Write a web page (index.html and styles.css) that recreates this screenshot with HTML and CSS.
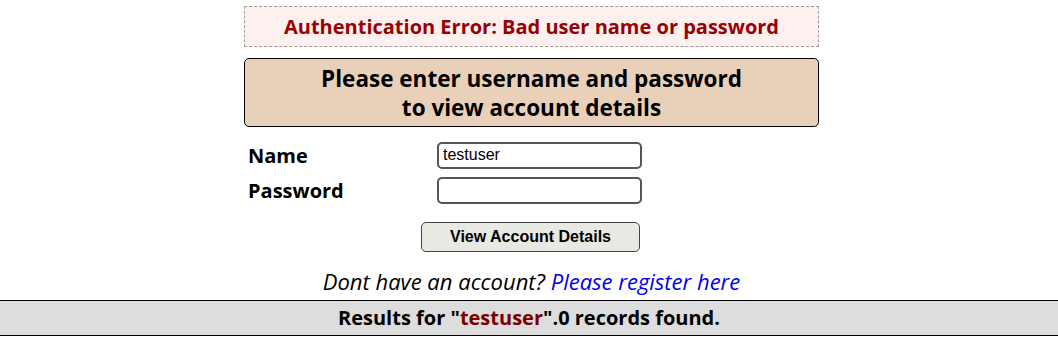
FILE: index.html
```html
<!DOCTYPE html>
<html lang="en">
<head>
    <meta charset="UTF-8">
    <title>Account Details</title>
    <link rel="stylesheet" href="styles.css">
</head>
<body>
    <div class="page">
        <div class="error">Authentication Error: Bad user name or password</div>
        <div class="banner">Please enter username and password<br>to view account details</div>
        <form class="login">
            <div class="row">
                <label for="name">Name</label>
                <input type="text" id="name" value="testuser">
            </div>
            <div class="row">
                <label for="pass">Password</label>
                <input type="password" id="pass">
            </div>
            <div class="actions">
                <button type="button">View Account Details</button>
            </div>
        </form>
        <p class="register">Dont have an account? <a href="#">Please register here</a></p>
    </div>
    <div class="results">Results for "<span class="term">testuser</span>".0 records found.</div>
</body>
</html>
```

FILE: styles.css
```css
body {
    margin: 0;
    font-family: "Open Sans", "Noto Sans", sans-serif;
    background: #fff;
    color: #000;
}
.page {
    width: 575px;
    margin: 0 auto;
    padding: 6px 0 0 5px;
}
.error {
    height: 39px;
    line-height: 39px;
    border: 1px dashed #a09a9a;
    background-color: #fff0f0;
    color: #990000;
    font-size: 20px;
    font-weight: bold;
    text-align: center;
}
.banner {
    margin-top: 11px;
    padding: 5px 0 4px;
    border: 1px solid #000;
    border-radius: 5px;
    background-color: #e9d0b9;
    font-size: 22.5px;
    font-weight: bold;
    line-height: 29px;
    text-align: center;
}
.login {
    margin: 15px 0 0;
}
.row {
    display: flex;
    align-items: center;
    height: 26px;
    margin-bottom: 9px;
}
.row label {
    width: 189px;
    padding-left: 4px;
    font-size: 20px;
    font-weight: bold;
}
.row input {
    box-sizing: border-box;
    width: 205px;
    height: 27px;
    padding: 0 4px;
    border: 2px solid #555;
    border-radius: 5px;
    font-family: "Liberation Sans", Arial, sans-serif;
    font-size: 16px;
}
.actions {
    padding: 10px 0 0 177px;
}
.actions button {
    width: 219px;
    height: 30px;
    border: 1px solid #444;
    border-radius: 5px;
    background-color: #e9e9e3;
    font-family: "Liberation Sans", Arial, sans-serif;
    font-size: 16px;
    font-weight: bold;
}
.register {
    margin: 14px 0 4px;
    font-size: 22px;
    line-height: 30px;
    font-style: italic;
    text-align: center;
}
.register a {
    color: #0000ee;
    text-decoration: none;
}
.results {
    border-top: 1px solid #000;
    border-bottom: 1px solid #000;
    background-color: #dddddd;
    height: 34px;
    line-height: 34px;
    font-size: 20px;
    font-weight: bold;
    text-align: center;
}
.term {
    color: #7a0000;
}
```
